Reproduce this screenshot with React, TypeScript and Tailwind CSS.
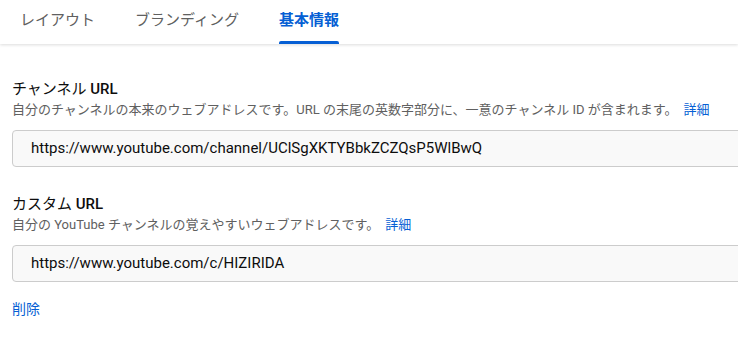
import React from "react";

const tabs = [
  { label: "レイアウト", active: false },
  { label: "ブランディング", active: false },
  { label: "基本情報", active: true },
];

const font = "font-['Roboto','Noto_Sans_CJK_JP',sans-serif]";

const Field: React.FC<{
  title: string;
  desc: React.ReactNode;
  value: string;
  className?: string;
}> = ({ title, desc, value, className }) => (
  <div className={className}>
    <h2 className="text-[15px] leading-[22px] text-[#0d0d0d]">
      {title} <span className="font-medium">URL</span>
    </h2>
    <p className="text-[13px] leading-[20px] text-[#606060]">
      {desc}
      <a className="text-[#065fd4] ml-[6px]">詳細</a>
    </p>
    <div className="mt-[10px] w-[760px] h-[37px] flex items-center pl-[18px] rounded-[4px] border border-[#cccccc] bg-[#f9f9f9] text-[15px] text-[#0d0d0d]">
      {value}
    </div>
  </div>
);

const App: React.FC = () => {
  return (
    <div className={`${font} w-[738px] h-[338px] overflow-hidden bg-white`}>
      <header className="h-[44px] flex shadow-[0_1px_3px_rgba(0,0,0,0.14)]">
        {tabs.map((tab) => (
          <div
            key={tab.label}
            className={`relative h-full px-5 pt-[9px] text-[15px] leading-[22px] ${
              tab.active ? "text-[#065fd4] font-bold" : "text-[#606060]"
            }`}
          >
            {tab.label}
            {tab.active && (
              <span className="absolute left-5 right-5 bottom-0 h-[3px] rounded-t-[2px] bg-[#065fd4]" />
            )}
          </div>
        ))}
      </header>

      <main className="pl-3 pt-[34px]">
        <Field
          title="チャンネル"
          desc="自分のチャンネルの本来のウェブアドレスです。URL の末尾の英数字部分に、一意のチャンネル ID が含まれます。"
          value="https://www.youtube.com/channel/UClSgXKTYBbkZCZQsP5WlBwQ"
        />
        <Field
          className="mt-[26px]"
          title="カスタム"
          desc="自分の YouTube チャンネルの覚えやすいウェブアドレスです。"
          value="https://www.youtube.com/c/HIZIRIDA"
        />
        <a className="block mt-[17px] text-[14px] leading-[20px] text-[#065fd4]">削除</a>
      </main>
    </div>
  );
};

export default App;
